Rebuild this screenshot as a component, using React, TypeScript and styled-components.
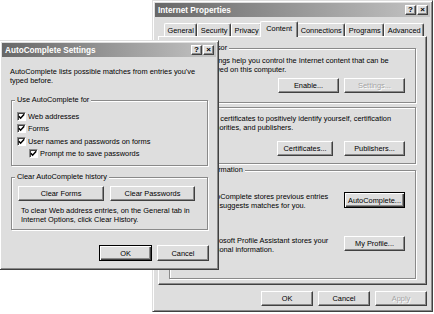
import * as React from "react";
import styled, { createGlobalStyle, css } from "styled-components";

const FACE = "#dedede";
const LIGHT = "#ffffff";
const SHADOW = "#8a8a8a";
const DARK = "#404040";

const GlobalStyle = createGlobalStyle`
  html, body {
    margin: 0;
    padding: 0;
    background: #fff;
  }
`;

const raised = css`
  border: 1px solid;
  border-color: ${LIGHT} ${DARK} ${DARK} ${LIGHT};
  box-shadow: inset -1px -1px 0 ${SHADOW};
`;

const Desktop = styled.div`
  position: relative;
  width: 434px;
  height: 314px;
  overflow: hidden;
  background: #fff;
  font-family: "Liberation Sans", Arial, sans-serif;
  font-size: 7.4px;
  line-height: 9px;
  white-space: nowrap;
  color: #000;
`;

const Window = styled.div<{ $x: number; $y: number; $w: number; $h: number }>`
  position: absolute;
  left: ${(p) => p.$x}px;
  top: ${(p) => p.$y}px;
  width: ${(p) => p.$w}px;
  height: ${(p) => p.$h}px;
  box-sizing: border-box;
  display: flex;
  flex-direction: column;
  padding: 2px;
  background: ${FACE};
  border: 1px solid;
  border-color: ${FACE} ${DARK} ${DARK} ${FACE};
  box-shadow: inset 1px 1px 0 ${LIGHT}, inset -1px -1px 0 ${SHADOW};
`;

const TitleBar = styled.div`
  flex: none;
  height: 14px;
  display: flex;
  align-items: center;
  padding: 0 2px 0 3px;
  background: linear-gradient(to right, #686868, #c4c4c4);
  color: #fff;
  font-weight: bold;
  font-size: 8.2px;
`;

const TitleText = styled.span`
  flex: 1;
`;

const CaptionButton = styled.span<{ $gap?: boolean }>`
  width: 11px;
  height: 10px;
  box-sizing: border-box;
  margin-left: ${(p) => (p.$gap ? 1 : 0)}px;
  display: flex;
  align-items: center;
  justify-content: center;
  background: ${FACE};
  ${raised};
  color: #000;
  font-size: 8px;
  font-weight: bold;
  line-height: 1;
`;

const Button = styled.button<{ $w: number; $h?: number; $default?: boolean }>`
  flex: none;
  width: ${(p) => p.$w}px;
  height: ${(p) => p.$h ?? 15}px;
  box-sizing: border-box;
  padding: 0;
  display: flex;
  align-items: center;
  justify-content: center;
  background: ${FACE};
  font: inherit;
  color: #000;
  ${raised};
  &:disabled {
    color: #a4a4a4;
    text-shadow: 1px 1px 0 ${LIGHT};
  }
  ${(p) =>
    p.$default &&
    css`
      border-color: #000;
      box-shadow: inset 1px 1px 0 ${LIGHT}, inset -1px -1px 0 ${DARK},
        inset -2px -2px 0 ${SHADOW};
    `}
`;

const Group = styled.fieldset<{ $pad: string; $top?: number }>`
  margin: ${(p) => p.$top ?? 0}px 0 0;
  padding: ${(p) => p.$pad};
  min-width: 0;
  border: 1px solid ${SHADOW};
  box-shadow: 1px 1px 0 ${LIGHT}, inset 1px 1px 0 ${LIGHT};
`;

const Legend = styled.legend`
  padding: 0 2px;
  margin-left: 3px;
  line-height: 10px;
  background: ${FACE};
`;

const ButtonRow = styled.div<{ $gap: number; $top?: number; $left?: number; $right?: number; $end?: boolean }>`
  display: flex;
  justify-content: ${(p) => (p.$end ? "flex-end" : "flex-start")};
  gap: ${(p) => p.$gap}px;
  margin-top: ${(p) => p.$top ?? 0}px;
  padding: 0 ${(p) => p.$right ?? 0}px 0 ${(p) => p.$left ?? 0}px;
`;

/* ---------- Internet Properties ---------- */

const SheetBody = styled.div`
  flex: 1;
  display: flex;
  flex-direction: column;
  padding: 4px 3px 3px;
`;

const TabStrip = styled.div`
  display: flex;
  align-items: flex-end;
  height: 15px;
  padding-left: 6px;
  position: relative;
  z-index: 1;
`;

const Tab = styled.div<{ $active?: boolean }>`
  height: 13px;
  box-sizing: border-box;
  padding: 0 2.5px;
  display: flex;
  align-items: center;
  background: ${FACE};
  border: 1px solid;
  border-bottom: none;
  border-color: ${LIGHT} ${DARK} ${DARK} ${LIGHT};
  box-shadow: inset -1px 0 0 ${SHADOW};
  border-radius: 2px 2px 0 0;
  ${(p) =>
    p.$active &&
    css`
      height: 16px;
      margin: 0 -1px -1px -2px;
      padding: 0 5px 2px;
      position: relative;
    `}
`;

const Panel = styled.div`
  flex: 1;
  display: flex;
  flex-direction: column;
  padding: 6px 10px 0 10px;
  background: ${FACE};
  ${raised};
`;

const InfoRow = styled.div<{ $top: number }>`
  display: flex;
  align-items: flex-start;
  padding: ${(p) => p.$top}px 10px 0 35px;
`;

const InfoText = styled.div`
  flex: 1;
`;

const SheetFooter = styled.div`
  display: flex;
  justify-content: flex-end;
  gap: 5px;
  margin-top: 6px;
`;

/* ---------- AutoComplete Settings ---------- */

const DialogBody = styled.div`
  flex: 1;
  display: flex;
  flex-direction: column;
  padding: 10px 8px 0 9px;
`;

const Intro = styled.div`
  margin: 0 0 10px -1px;
`;

const CheckRow = styled.label<{ $indent?: boolean }>`
  display: flex;
  align-items: center;
  gap: 2px;
  height: 12.5px;
  padding-left: ${(p) => (p.$indent ? 17 : 5)}px;
`;

const Box = styled.span`
  width: 9px;
  height: 9px;
  box-sizing: border-box;
  display: flex;
  align-items: center;
  justify-content: center;
  background: #fff;
  border: 1px solid;
  border-color: ${SHADOW} ${LIGHT} ${LIGHT} ${SHADOW};
  box-shadow: inset 1px 1px 0 ${DARK};
`;

const Note = styled.div`
  padding-left: 9px;
  margin-top: 5px;
`;

const DialogFooter = styled.div`
  display: flex;
  justify-content: flex-end;
  gap: 5px;
  margin: 15px -1px 0 0;
`;

function Caption({ title }: { title: string }) {
  return (
    <TitleBar>
      <TitleText>{title}</TitleText>
      <CaptionButton>?</CaptionButton>
      <CaptionButton $gap>×</CaptionButton>
    </TitleBar>
  );
}

function CheckBox({ label, indent }: { label: string; indent?: boolean }) {
  return (
    <CheckRow $indent={indent}>
      <Box>
        <svg width="7" height="7" viewBox="0 0 7 7">
          <path d="M0.8 3.2 L2.6 5.2 L6.2 1.2" fill="none" stroke="#000" strokeWidth="1.5" />
        </svg>
      </Box>
      {label}
    </CheckRow>
  );
}

const tabs = ["General", "Security", "Privacy", "Content", "Connections", "Programs", "Advanced"];

export default function App() {
  return (
    <Desktop>
      <GlobalStyle />

      <Window $x={152} $y={0} $w={281} $h={312}>
        <Caption title="Internet Properties" />
        <SheetBody>
          <TabStrip>
            {tabs.map((t) => (
              <Tab key={t} $active={t === "Content"}>
                {t}
              </Tab>
            ))}
          </TabStrip>
          <Panel>
            <Group $pad="0 0 9px">
              <Legend>Content Advisor</Legend>
              <InfoRow $top={3}>
                <InfoText>
                  Ratings help you control the Internet content that can be
                  <br />
                  viewed on this computer.
                </InfoText>
              </InfoRow>
              <ButtonRow $end $gap={5} $top={4} $right={10}>
                <Button $w={61}>Enable...</Button>
                <Button $w={61} disabled>
                  Settings...
                </Button>
              </ButtonRow>
            </Group>
            <Group $pad="0 0 7px" $top={-1}>
              <Legend>Certificates</Legend>
              <InfoRow $top={2}>
                <InfoText>
                  Use certificates to positively identify yourself, certification
                  <br />
                  authorities, and publishers.
                </InfoText>
              </InfoRow>
              <ButtonRow $end $gap={11} $top={9} $right={10}>
                <Button $w={56}>Certificates...</Button>
                <Button $w={61}>Publishers...</Button>
              </ButtonRow>
            </Group>
            <Group $pad="0 0 24px" $top={1}>
              <Legend>Personal information</Legend>
              <InfoRow $top={17}>
                <InfoText>
                  AutoComplete stores previous entries
                  <br />
                  and suggests matches for you.
                </InfoText>
                <Button $w={61} $h={16} $default>
                  AutoComplete...
                </Button>
              </InfoRow>
              <InfoRow $top={26}>
                <InfoText>
                  Microsoft Profile Assistant stores your
                  <br />
                  personal information.
                </InfoText>
                <Button $w={61}>My Profile...</Button>
              </InfoRow>
            </Group>
          </Panel>
          <SheetFooter>
            <Button $w={52}>OK</Button>
            <Button $w={52}>Cancel</Button>
            <Button $w={52} disabled>
              Apply
            </Button>
          </SheetFooter>
        </SheetBody>
      </Window>

      <Window $x={-1} $y={40} $w={220} $h={230}>
        <Caption title="AutoComplete Settings" />
        <DialogBody>
          <Intro>
            AutoComplete lists possible matches from entries you've
            <br />
            typed before.
          </Intro>
          <Group $pad="5px 0 5px">
            <Legend>Use AutoComplete for</Legend>
            <CheckBox label="Web addresses" />
            <CheckBox label="Forms" />
            <CheckBox label="User names and passwords on forms" />
            <CheckBox label="Prompt me to save passwords" indent />
          </Group>
          <Group $pad="4px 0 5px" $top={6}>
            <Legend>Clear AutoComplete history</Legend>
            <ButtonRow $gap={6} $left={6}>
              <Button $w={86}>Clear Forms</Button>
              <Button $w={85}>Clear Passwords</Button>
            </ButtonRow>
            <Note>
              To clear Web address entries, on the General tab in
              <br />
              Internet Options, click Clear History.
            </Note>
          </Group>
          <DialogFooter>
            <Button $w={53} $h={16} $default>
              OK
            </Button>
            <Button $w={52} $h={16}>
              Cancel
            </Button>
          </DialogFooter>
        </DialogBody>
      </Window>
    </Desktop>
  );
}
